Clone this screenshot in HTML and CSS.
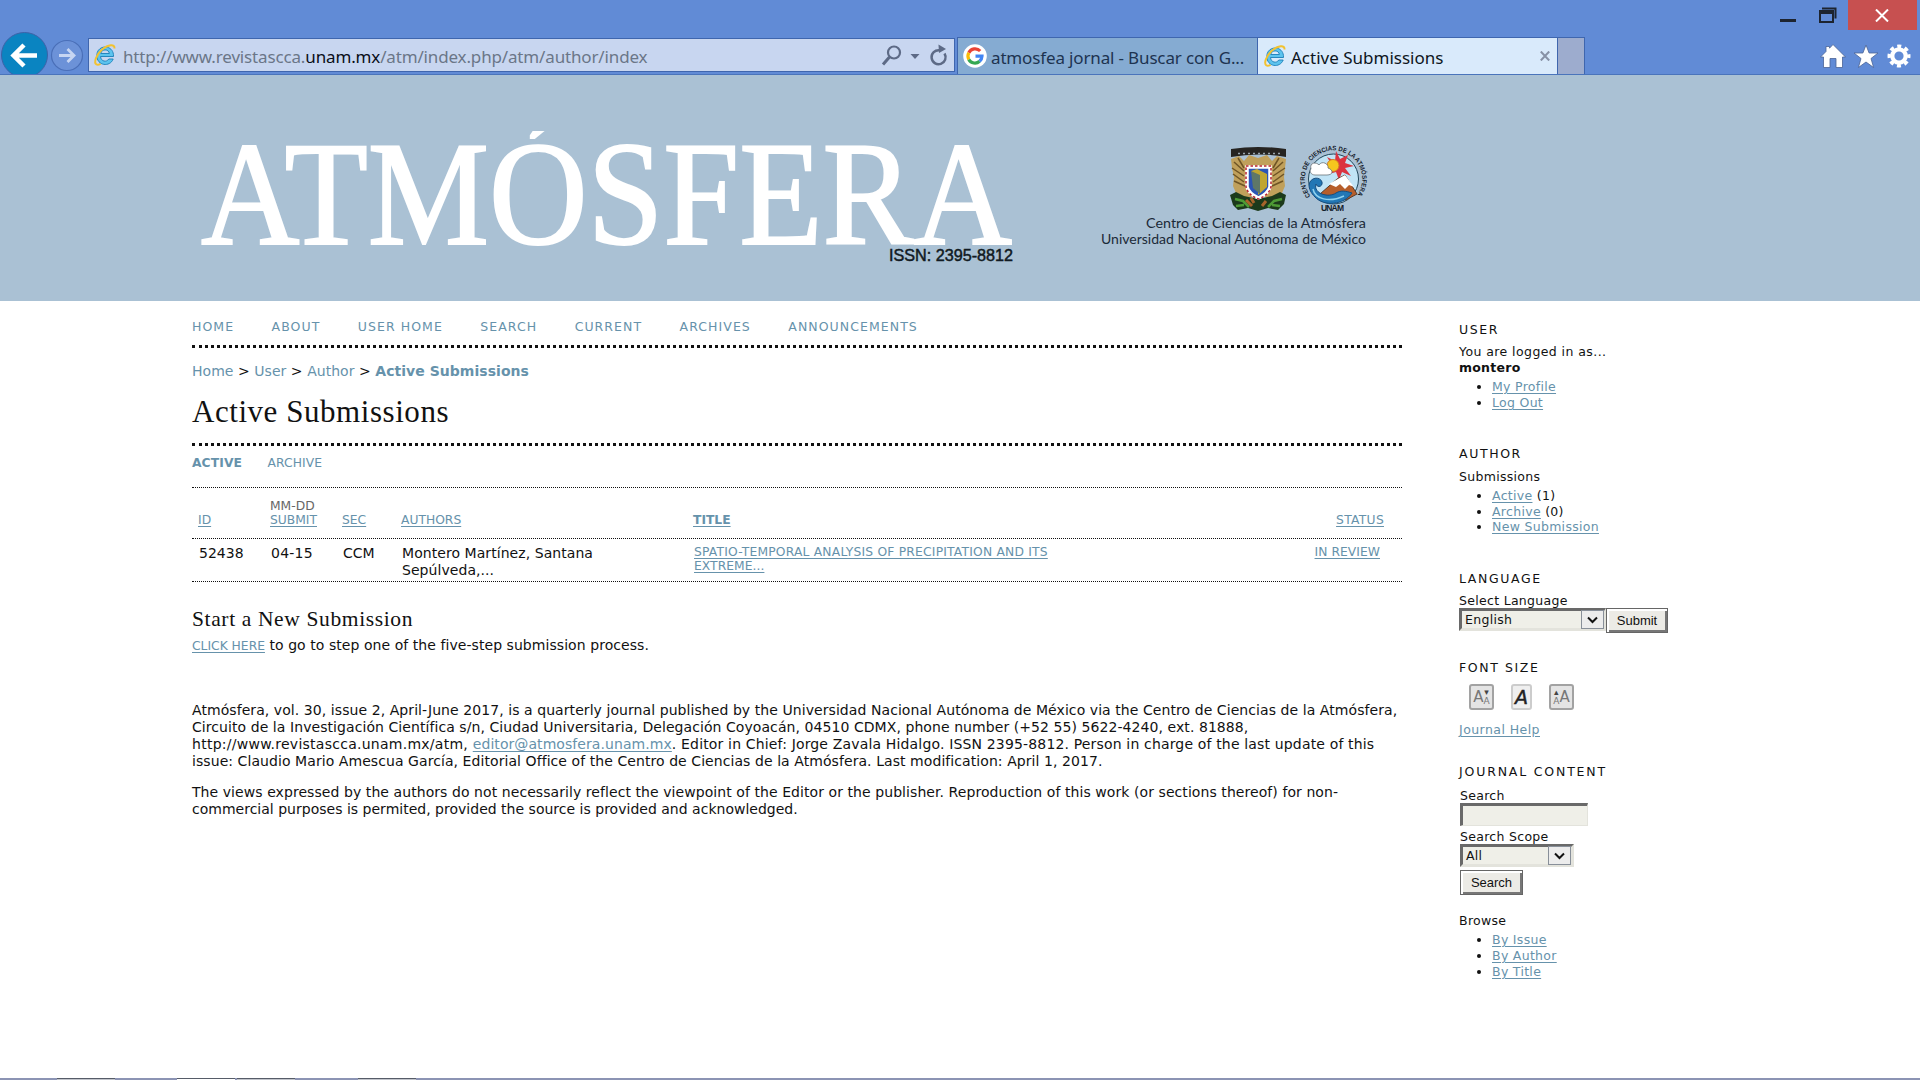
FILE: index.html
```
<!DOCTYPE html>
<html lang="en">
<head>
<meta charset="utf-8">
<title>Active Submissions</title>
<link rel="stylesheet" href="styles.css">
</head>
<body>
<header class="chrome">
  <div class="titlebar">
    <svg class="winctl" width="72" height="30" viewBox="1776 0 72 30"><path d="M1780 19h16v3h-16z" fill="#1d2430"/><path d="M1822 8.5h13.500v10" fill="none" stroke="#1d2430" stroke-width="2"/><path d="M1820 12h13v10h-13z" fill="none" stroke="#1d2430" stroke-width="2"/><path d="M1819 10h15v4h-15z" fill="#1d2430"/></svg>
    <div class="close"><svg width="14" height="13" viewBox="0 0 14 13"><path d="M1 .5l12 12M13 .5l-12 12" stroke="#fff" stroke-width="2" fill="none"/></svg></div>
  </div>
  <div class="toolbar">
    <svg class="navbtns" width="88" height="43" viewBox="0 31 88 43">
      <ellipse cx="24.500" cy="55" rx="23" ry="22.500" fill="#0a84c1" stroke="#3c62a8"/>
      <path d="M37 55.500H14M24 45L13.500 55.500L24 66" fill="none" stroke="#fff" stroke-width="4.500"/>
      <ellipse cx="67" cy="55.500" rx="15.500" ry="15" fill="#6c92d8" stroke="#4a6fb8" stroke-width="1.200"/>
      <path d="M59 55.500h14M67.500 49l6.500 6.500l-6.500 6.500" fill="none" stroke="#c6d5f2" stroke-width="2.800"/>
    </svg>
    <div class="address">
      <svg class="ie" width="24" height="24" viewBox="0 0 24 24"><path d="M20.500 13.500H7.500c.4 5 6 6.200 8.300 2.500h4.400c-3.200 8.500-16.400 7-16.400-3.500 0-11.500 17.400-11.500 16.700 1zM7.800 10.500h8.600c-.6-4.800-8-4.800-8.600 0z" fill="#5cc3ee" stroke="#1b7fb8" stroke-width=".9" fill-rule="evenodd"/><path d="M21.500 5.500C22 .5 15 1.500 9 6.500C3 12 .5 19.500 3.500 21.500c1 .6 2.500.2 4-.7" fill="none" stroke="#f2c230" stroke-width="2"/></svg>
      <span class="url">http://www.revistascca.<b>unam.mx</b>/atm/index.php/atm/author/index</span>
      <svg width="72" height="26" viewBox="879 42 72 26" fill="none" stroke="#5d6a86"><circle cx="894" cy="52.500" r="6" stroke-width="2.200"/><path d="M889.500 57l-6.500 7.500" stroke-width="3"/><path d="M910.500 54h9l-4.500 5z" fill="#5d6a86" stroke="none"/><path d="M944.500 51.500a7 7 0 1 1-5-3.200" stroke-width="2.500" transform="translate(0 2)"/><path d="M938.500 44.500l7.500 4.500l-7 4z" fill="#5d6a86" stroke="none"/></svg>
    </div>
    <div class="tab tab-google">
      <svg width="24" height="24" viewBox="0 0 24 24"><circle cx="12" cy="12" r="11.800" fill="#fff"/><g fill="none" stroke-width="3.200"><path d="M17.200 7A7 7 0 0 0 5.800 8.800" stroke="#ea4335"/><path d="M5.800 8.800a7 7 0 0 0 0 6.600" stroke="#fbbc05"/><path d="M5.800 15.400A7 7 0 0 0 16.600 17.300" stroke="#34a853"/><path d="M16.600 17.300A7 7 0 0 0 19 12.200H12.500" stroke="#4285f4"/></g></svg>
      <span>atmosfea jornal - Buscar con G...</span>
    </div>
    <div class="tab tab-active">
      <svg class="ie" width="24" height="24" viewBox="0 0 24 24"><path d="M20.500 13.500H7.500c.4 5 6 6.200 8.300 2.500h4.400c-3.200 8.500-16.400 7-16.400-3.500 0-11.500 17.400-11.500 16.700 1zM7.800 10.500h8.600c-.6-4.800-8-4.800-8.600 0z" fill="#5cc3ee" stroke="#1b7fb8" stroke-width=".9" fill-rule="evenodd"/><path d="M21.500 5.500C22 .5 15 1.500 9 6.500C3 12 .5 19.500 3.500 21.500c1 .6 2.500.2 4-.7" fill="none" stroke="#f2c230" stroke-width="2"/></svg>
      <span class="title">Active Submissions</span>
      <svg class="tabx" width="10" height="10" viewBox="0 0 10 10"><path d="M.8.5l8.400 9M9.200.5l-8.400 9" stroke="#8791a5" stroke-width="2"/></svg>
    </div>
    <div class="newtab"></div>
    <svg class="tools" width="100" height="30" viewBox="1816 40 100 30" fill="#fff" stroke="#4a6396" stroke-width=".8"><path d="M1820.500 57L1826 51.500V46.500h3.500v1.700L1833 44.500 1845.500 57h-3v10.500h-6.500v-9h-6v9h-6.500V57z"/><path d="M1866 45l3.100 8h8.900l-7 5.500 2.600 9-7.600-5.500-7.600 5.500 2.600-9-7-5.500h8.900z"/><circle cx="1899" cy="56" r="9.500" fill="none" stroke="#fff" stroke-width="4" stroke-dasharray="3.900 3.560" stroke-dashoffset="2"/><circle cx="1899" cy="56" r="6.700" fill="none" stroke="#fff" stroke-width="4.200"/></svg>
  </div>
</header>
<div class="banner">
  <svg width="1920" height="226" viewBox="0 75 1920 226">
    <clipPath id="logo-box"><path d="M190 131h840v130h-840z"/></clipPath>
    <g clip-path="url(#logo-box)"><text class="logo" x="201" y="244" textLength="811" lengthAdjust="spacingAndGlyphs">ATMÓSFERA</text></g>
    <text class="issn" x="889" y="261" textLength="124" lengthAdjust="spacingAndGlyphs">ISSN: 2395-8812</text>
    <text class="inst" x="1146" y="228" textLength="220" lengthAdjust="spacingAndGlyphs">Centro de Ciencias de la Atmósfera</text>
    <text class="inst" x="1101" y="244" textLength="265" lengthAdjust="spacingAndGlyphs">Universidad Nacional Autónoma de México</text>
    <g>
      <path d="M1231 149q27-4 55 0v8q-27-5-55 0z" fill="#262421"/>
      <path d="M1238 153.500h42" stroke="#9aa5ad" stroke-width="1.500" stroke-dasharray="2 3"/>
      <path d="M1231 159l8-3 5 5 5-6 9 3 9-3 5 6 5-5 9 3-1 9-1 9 1 9-3 7-7 4h-32l-7-4-3-7 1-9-2-9z" fill="#c0a05b"/>
      <path d="M1234 162l10 9M1232 168l12 8M1233 174l11 8M1234 181l11 5M1283 162l-10 9M1285 168l-12 8M1284 174l-11 8M1283 181l-11 5M1238 158l6 10M1279 158l-6 10" stroke="#6f5526" stroke-width="1.500" fill="none"/>
      <path d="M1230 195l6-3 8 4 14 3 14-3 8-4 6 3-2 9-6 6-10-2-10 3-10-3-10 2-5-5z" fill="#1c3a1b"/>
      <path d="M1235 199l8 2 6 6M1282 199l-8 2-6 6M1236 206l8-1M1280 206l-8-1" stroke="#4d9a35" stroke-width="2.500" fill="none"/>
      <path d="M1246 200l6 6M1251 198l3 5M1266 201l-4 5" stroke="#a8642a" stroke-width="3"/>
      <path d="M1247 167h23v20q-2 7-11.500 11q-9.500-4-11.500-11z" fill="#2b55b5" stroke="#fff" stroke-width="3.500"/>
      <path d="M1246 166h25v21q-2 8-12.500 12q-10.500-4-12.500-12z" fill="none" stroke="#b82330" stroke-width="1.500" stroke-dasharray="2.500 2"/>
      <path d="M1251 171l6-2 10 5v13l-9 8 1-14z" fill="#c0a631"/><path d="M1251 171l9 4v19l-7-6z" fill="#5e7768"/>
    </g>
    <g>
      <circle cx="1333.500" cy="179" r="25" fill="#c1e4f6" stroke="#21465a"/>
      <path d="M1332 165l-5-8 8 4 1-10 4 8 8-4-3 8 9 3-9 2 6 8-9-4-3 8-3-8-7 2z" fill="#db3340"/>
      <circle cx="1333" cy="165.500" r="6" fill="#f6c51e" stroke="#d67825"/>
      <path d="M1311 169c-2-7 6-7 8-4 3-5 10-1 9 3 6 2 5 7-1 7h-12c-4 0-6-4-4-6z" fill="#fff" stroke="#69747a" stroke-width=".8"/>
      <path d="M1320 194l17-15 8-4 12 19-11 6z" fill="#b75e2b" stroke="#5b3c2a"/>
      <path d="M1329 184l16-9 9 12-5-2-4 4-5-5-4 3z" fill="#fff"/>
      <path d="M1309 185c1-8 11-9 13-3 1 5-5 6-6 2-3 10 13 14 20 9 5-3 10-2 16 0-8 12-28 14-37 4-4-4-6-8-6-12z" fill="#2277b5" stroke="#174e80"/>
      <path d="M1313 189c2 10 16 14 31 7" fill="none" stroke="#8fd1ef" stroke-width="1.500"/>
      <path id="ring" d="M1310.500 196A28.600 28.600 0 1 1 1356.500 196" fill="none"/>
      <text class="ring"><textPath href="#ring" textLength="124" lengthAdjust="spacingAndGlyphs">CENTRO DE CIENCIAS DE LA ATMÓSFERA</textPath></text>
      <text class="unam" x="1321" y="211" textLength="23">UNAM</text>
    </g>
  </svg>
</div>
<div class="page">
  <main class="main">
    <nav class="nav"><a>HOME</a><a>ABOUT</a><a>USER HOME</a><a>SEARCH</a><a>CURRENT</a><a>ARCHIVES</a><a>ANNOUNCEMENTS</a></nav>
    <div class="crumbs"><a>Home</a> &gt; <a>User</a> &gt; <a>Author</a> &gt; <a class="cur">Active Submissions</a></div>
    <h1>Active Submissions</h1>
    <div class="subnav"><a class="cur">ACTIVE</a><a>ARCHIVE</a></div>
    <div class="grid head">
      <div><a>ID</a></div><div>MM-DD<br><a>SUBMIT</a></div><div><a>SEC</a></div><div><a>AUTHORS</a></div><div><a class="cur">TITLE</a></div><div class="r"><a>STATUS</a></div>
    </div>
    <div class="grid row">
      <div>52438</div><div class="date">04-15</div><div>CCM</div><div class="names">Montero Martínez, Santana<br>Sepúlveda,...</div><div class="small"><a>SPATIO-TEMPORAL ANALYSIS OF PRECIPITATION AND ITS</a><br><a class="end">EXTREME...</a></div><div class="small r"><a class="end">IN REVIEW</a></div>
    </div>
    <h2>Start a New Submission</h2>
    <p class="start"><a class="act">CLICK HERE</a> to go to step one of the five-step submission process.</p>
    <div class="about">
      <p>Atmósfera, vol. 30, issue 2, April-June 2017, is a quarterly journal published by the Universidad Nacional Autónoma de México via the Centro de Ciencias de la Atmósfera,<br>Circuito de la Investigación Científica s/n, Ciudad Universitaria, Delegación Coyoacán, 04510 CDMX, phone number (+52 55) 5622-4240, ext. 81888,<br><span class="loose">http://www.revistascca.unam.mx/atm, </span><a>editor@atmosfera.unam.mx</a><span class="wide">. Editor in Chief: Jorge Zavala Hidalgo. ISSN 2395-8812. Person in charge of the last update of this</span><br>issue: Claudio Mario Amescua García, Editorial Office of the Centro de Ciencias de la Atmósfera. Last modification: April 1, 2017.</p>
      <p>The views expressed by the authors do not necessarily reflect the viewpoint of the Editor or the publisher. Reproduction of this work (or sections thereof) for non-<br><span class="tight">commercial purposes is permited, provided the source is provided and acknowledged.</span></p>
    </div>
  </main>
  <aside class="side">
    <section class="b-user"><h3>USER</h3><div><span class="logged">You are logged in as...</span><br><b>montero</b></div><ul><li><a>My Profile</a></li><li><a>Log Out</a></li></ul></section>
    <section class="b-author"><h3>AUTHOR</h3><div>Submissions</div><ul><li><a>Active</a> (1)</li><li><a>Archive</a> (0)</li><li><a>New Submission</a></li></ul></section>
    <section class="b-lang"><h3>LANGUAGE</h3><div>Select Language</div>
      <div class="langrow"><div class="select lang"><span>English</span><i><svg width="11" height="8" viewBox="0 0 11 8"><path d="M1 1.500l4.500 4.500L10 1.500" fill="none" stroke="#111" stroke-width="2"/></svg></i></div><button class="submit">Submit</button></div></section>
    <section class="b-font"><h3>FONT SIZE</h3>
      <div class="sizes"><span class="sz">A<small><i>▾</i>A</small></span><span class="sz mid">A</span><span class="sz"><small><i>▴</i>A</small>A</span></div>
      <div class="help"><a>Journal Help</a></div></section>
    <section class="b-content"><h3>JOURNAL CONTENT</h3><div class="in">Search</div><div class="field"></div><div class="in scope">Search Scope</div>
      <div class="select all"><span>All</span><i><svg width="11" height="8" viewBox="0 0 11 8"><path d="M1 1.500l4.500 4.500L10 1.500" fill="none" stroke="#111" stroke-width="2"/></svg></i></div><button class="search">Search</button>
      <div class="browse">Browse</div><ul><li><a>By Issue</a></li><li><a>By Author</a></li><li><a>By Title</a></li></ul></section>
  </aside>
</div>
<footer class="taskbar"><i></i><i class="on"></i><i></i><i></i></footer>
</body>
</html>
```
FILE: styles.css
```
* { box-sizing: border-box; }
body { margin: 0; width: 1920px; height: 1080px; overflow: hidden; background: #fff; color: #111; font-family: "DejaVu Sans", Verdana, sans-serif; font-size: 14px; line-height: 17px; display: flex; flex-direction: column; position: relative; }
h1, h2, h3, p, ul { margin: 0; padding: 0; font-weight: normal; }
svg { display: block; flex: none; }
a { color: #6692ab; white-space: nowrap; }
.cur { font-weight: bold; }

.chrome { height: 75px; background: #618bd6; border-bottom: 1px solid #4a74bb; flex: none; }
.titlebar { height: 31px; display: flex; justify-content: flex-end; padding-right: 3px; }
.close { width: 69px; height: 30px; background: #c75050; display: flex; align-items: center; justify-content: center; padding-right: 2px; }
.toolbar { display: flex; height: 43px; align-items: flex-end; font-family: "Noto Sans", sans-serif; font-size: 17px; letter-spacing: -.15px; color: #1d3350; }
.address { width: 867px; height: 34px; margin-bottom: 2px; margin-right: 2px; background: #c8d6f0; border: 1px solid #3f66ae; display: flex; align-items: center; padding: 0 3px 0 4px; }
.url { flex: 1; margin-left: 6px; padding-top: 2px; color: #6b7688; white-space: nowrap; }
.url b { font-weight: normal; color: #0a0e18; }
.tab { width: 300px; height: 37px; border: 1px solid #3f66ae; border-bottom: 0; display: flex; align-items: center; padding-left: 5px; gap: 4px; white-space: nowrap; background: #85abd2; }
.tab span { padding-top: 2px; }
.tab .title { letter-spacing: 0; }
.tab-google { width: 301px; }
.tab-active { background: #d9eafb; color: #0d1520; border-left: 0; }
.tabx { margin-left: auto; margin-right: 7px; }
.newtab { width: 27px; height: 37px; background: #9dacce; border: 1px solid #3f66ae; border-width: 1px 1px 0 0; }
.tools { margin-left: auto; margin-right: 4px; margin-bottom: 4px; }

.banner { height: 226px; background: #aac1d4; flex: none; }
.logo { font: 148px "Liberation Serif", serif; fill: #fff; stroke: #fff; stroke-width: 2px; }
.issn { font: 17px "Liberation Sans", sans-serif; fill: #111a22; stroke: #111a22; stroke-width: .5px; }
.inst { font: 14px Lato, sans-serif; fill: #1b2a38; }
.ring { font: bold 6.500px "Liberation Sans", sans-serif; fill: #14202b; }
.unam { font: bold 8.500px "Liberation Sans", sans-serif; fill: #14202b; }

.page { display: flex; padding-left: 192px; flex: 1; }
.main { width: 1210px; white-space: nowrap; }
.nav { height: 47px; border-bottom: 3px dotted #111; padding-top: 17px; display: flex; gap: 37.400px; font-size: 12.500px; line-height: 17px; letter-spacing: 1.060px; }
.crumbs { padding-top: 15px; height: 42px; letter-spacing: .04px; }
h1 { font: 31px/36px "Liberation Serif", serif; letter-spacing: .55px; height: 56px; padding-top: 4px; border-bottom: 3px dotted #111; }
.subnav { height: 41px; padding-top: 8px; font-size: 12.300px; line-height: 18px; letter-spacing: .1px; display: flex; gap: 25.500px; }
.grid { display: grid; grid-template-columns: 72px 72px 59px 292px 1fr 80px; border-top: 1px dotted #111; padding-left: 6px; }
.grid a, .about a, .start a, .side a { text-decoration: underline; text-underline-offset: 2px; }
.head { height: 51px; padding-bottom: 11px; padding-right: 18px; font-size: 12.300px; line-height: 14px; align-items: end; color: #666; }
.head .r { letter-spacing: .3px; }
.row { height: 44px; padding: 6px 22px 0 7px; border-bottom: 1px dotted #111; }
.date { letter-spacing: .25px; }
.names { letter-spacing: .06px; }
.small { font-size: 12.300px; line-height: 14px; letter-spacing: .2px; }
.small .end { letter-spacing: .05px; }
.r { text-align: right; }
h2 { font: 21.500px/26px "Liberation Serif", serif; letter-spacing: .63px; margin-top: 24px; }
.start { padding-top: 5px; letter-spacing: .06px; }
.act { font-size: 12.300px; letter-spacing: 0; }
.about { padding-top: 47px; letter-spacing: .07px; }
.about p { margin-bottom: 14px; }
.loose { letter-spacing: .26px; }
.wide { letter-spacing: .16px; }
.tight { letter-spacing: .01px; }

.side { margin-left: 57px; width: 260px; padding-top: 21px; font-size: 12.500px; line-height: 16px; letter-spacing: .3px; white-space: nowrap; }
.side b { letter-spacing: .25px; }
.logged { letter-spacing: .42px; }
h3 { font-size: 12.500px; line-height: 16px; letter-spacing: 1.600px; margin-bottom: 6px; }
.b-user { height: 124px; }
.b-author { height: 125px; }
.b-lang { height: 89px; }
.b-font { height: 104px; }
.b-author h3 { margin-bottom: 7px; }
.side ul { margin-top: 3px; padding-left: 33px; }
.side li { line-height: 16px; }
.b-author li { line-height: 15.700px; }
.help { letter-spacing: .44px; }
.langrow { display: flex; margin-top: -1px; }
.select { display: flex; justify-content: space-between; align-items: center; height: 23px; background: #efefe8; border: 3px solid; border-color: #696969 #e3e3dc #e3e3dc #696969; padding-left: 3px; }
.select i { width: 23px; height: 19px; border: 1px solid #888f99; background: #ececec; display: flex; align-items: center; justify-content: center; }
.lang { width: 147px; border-right-width: 2px; }
.all { width: 114px; }
.side button { height: 25px; background: #ecebe6; border: 1px solid #666; box-shadow: inset 2px 2px #fff, inset -2px -2px #777; font: 13px "Liberation Sans", sans-serif; padding: 0; color: #111; display: block; }
.submit { width: 62px; }
.search { width: 63px; margin-top: 3px; }
.sizes { display: flex; gap: 17px; padding: 2px 0 0 10px; height: 40px; letter-spacing: 0; }
.sz { width: 25px; height: 26px; border: 2px solid #a2a2a2; border-radius: 3px; background: #e4e4e4; color: #777; font: 15px/22px "DejaVu Sans", sans-serif; display: flex; justify-content: center; }
.sz small { font-size: 9px; line-height: 9px; display: flex; flex-direction: column; padding-top: 2px; align-items: center; }
.sz i { font-style: normal; color: #444; }
.mid { width: 21px; border-color: #ccc; color: #222; font-size: 19px; font-style: oblique; -webkit-text-stroke: .5px #222; background: #efefef; }
.b-content { padding-left: 1px; }
.b-content h3 { margin-left: -1px; margin-bottom: 8px; letter-spacing: 1.820px; }
.field { width: 128px; height: 23px; margin-top: -1px; background: #efefe8; border: 3px solid; border-color: #696969 #e3e3dc #e3e3dc #696969; border-right-width: 1px; border-bottom-width: 1px; }
.scope { margin-top: 3px; margin-bottom: -1px; }
.browse { margin: 18px 0 0 -1px; }
.b-content ul { margin-left: -1px; }
.taskbar { position: absolute; left: 0; bottom: 0; width: 1920px; height: 2px; background: #8c94b4; display: flex; padding-left: 57px; }
.taskbar i { width: 58px; height: 2px; background: #c2c5cc; border-top: 1px solid #565c68; margin-right: 62px; }
.taskbar .on { background: #fff; margin-right: 2px; }
.taskbar i:nth-child(3) { margin-right: 63px; }
```
